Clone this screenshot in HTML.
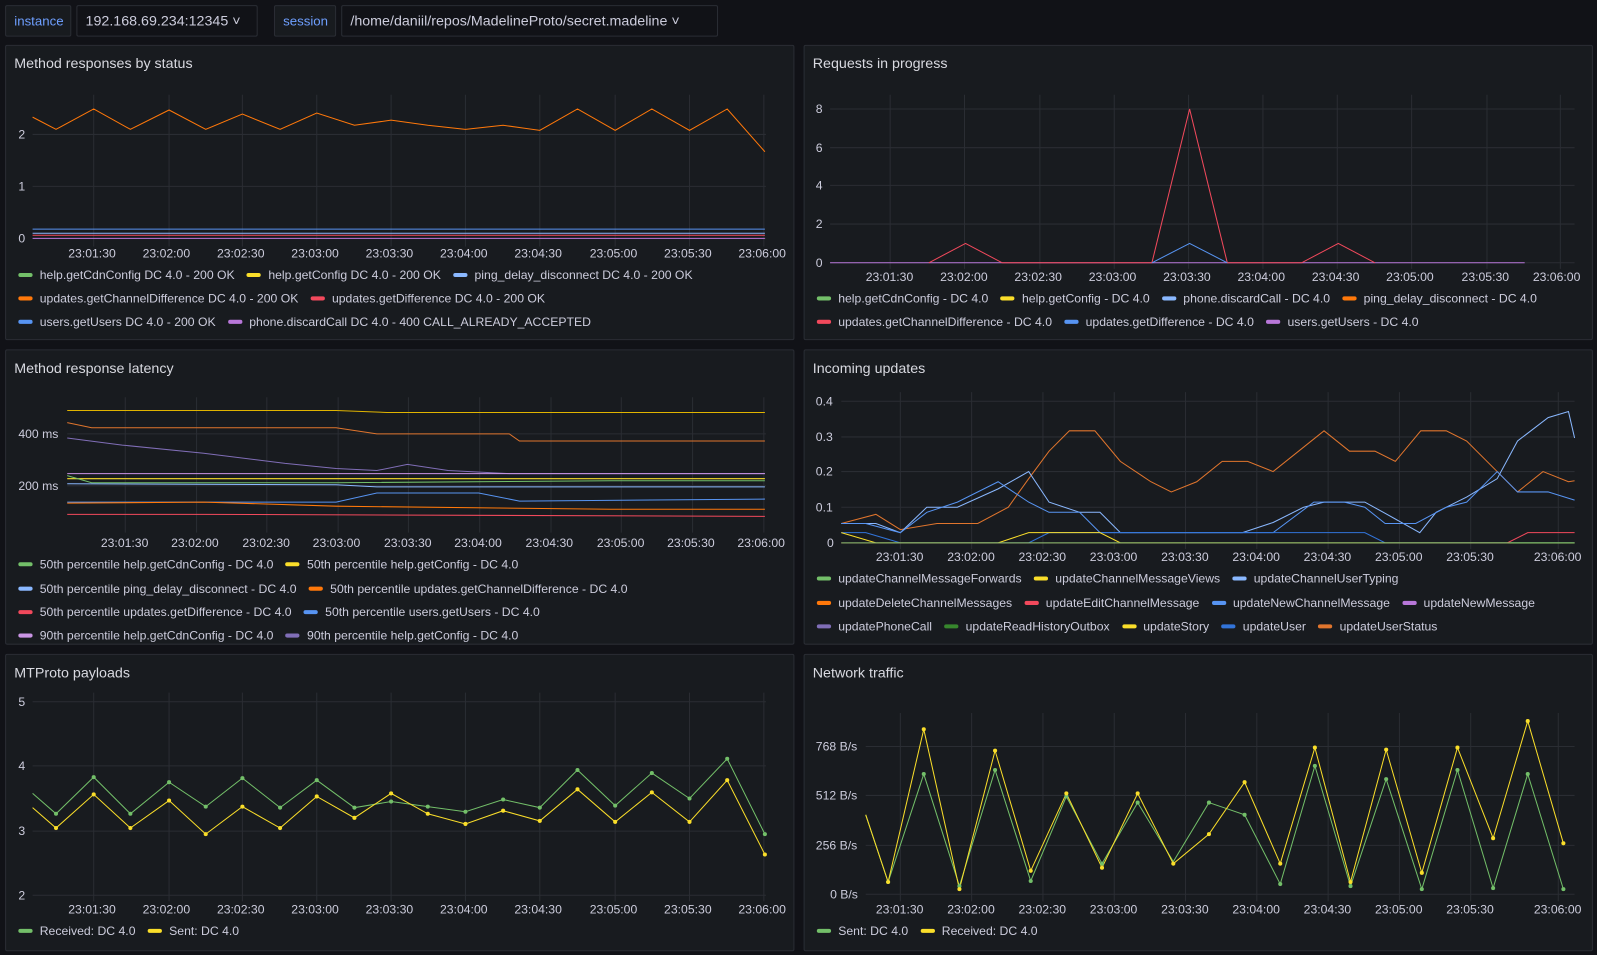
<!DOCTYPE html>
<html><head><meta charset="utf-8"><style>
body{margin:0;width:1597px;height:955px;background:#111217;font-family:"Liberation Sans",sans-serif;overflow:hidden;position:relative;color:#ccccdc}
#w{position:absolute;left:0;top:0;width:1568px;height:938px;transform:scale(1.01849);transform-origin:0 0}
.p{position:absolute;background:#181b1f;border:1px solid #2a2d34;border-radius:2px;box-sizing:border-box}
.t{position:absolute;left:8px;top:9px;font-size:14px;color:#d8d9e0}
.lg{position:absolute;font-size:12px;color:#ccccdc;white-space:nowrap}
.lg span{display:inline-block;width:14px;height:4px;border-radius:2px;margin:0 7px 2px 0;vertical-align:middle}
.lg b{font-weight:normal;margin-right:12px}
.box{position:absolute;top:5px;height:31px;border:1px solid #2a2d34;border-radius:2px;box-sizing:border-box;font-size:14px;line-height:29px;padding:0 8px}
svg{position:absolute;left:0;top:0}
svg text{font-family:"Liberation Sans",sans-serif;font-size:12px;fill:#ccccdc}
</style></head><body><div id="w">
<div class="box" style="left:5px;width:65px;background:#181b1f;color:#6e9fff;font-size:13px">instance</div>
<div class="box" style="left:75px;width:178px;background:#111217">192.168.69.234:12345 ˅</div>
<div class="box" style="left:269px;width:61px;background:#181b1f;color:#6e9fff;font-size:13px">session</div>
<div class="box" style="left:335px;width:370px;background:#111217">/home/daniil/repos/MadelineProto/secret.madeline ˅</div>

<div class="p" style="left:5px;top:44px;width:775px;height:290px"><div class="t">Method responses by status</div>
<div class="lg" style="left:12px;top:218px"><span style="background:#73bf69"></span><b>help.getCdnConfig DC 4.0 - 200 OK</b><span style="background:#fade2a"></span><b>help.getConfig DC 4.0 - 200 OK</b><span style="background:#8ab8ff"></span><b>ping_delay_disconnect DC 4.0 - 200 OK</b></div>
<div class="lg" style="left:12px;top:241px"><span style="background:#ff780a"></span><b>updates.getChannelDifference DC 4.0 - 200 OK</b><span style="background:#f2495c"></span><b>updates.getDifference DC 4.0 - 200 OK</b></div>
<div class="lg" style="left:12px;top:264px"><span style="background:#5794f2"></span><b>users.getUsers DC 4.0 - 200 OK</b><span style="background:#b877d9"></span><b>phone.discardCall DC 4.0 - 400 CALL_ALREADY_ACCEPTED</b></div></div>

<div class="p" style="left:789px;top:44px;width:775px;height:290px"><div class="t">Requests in progress</div>
<div class="lg" style="left:12px;top:241px"><span style="background:#73bf69"></span><b>help.getCdnConfig - DC 4.0</b><span style="background:#fade2a"></span><b>help.getConfig - DC 4.0</b><span style="background:#8ab8ff"></span><b>phone.discardCall - DC 4.0</b><span style="background:#ff780a"></span><b>ping_delay_disconnect - DC 4.0</b></div>
<div class="lg" style="left:12px;top:264px"><span style="background:#f2495c"></span><b>updates.getChannelDifference - DC 4.0</b><span style="background:#5794f2"></span><b>updates.getDifference - DC 4.0</b><span style="background:#b877d9"></span><b>users.getUsers - DC 4.0</b></div></div>

<div class="p" style="left:5px;top:343px;width:775px;height:290px;overflow:hidden"><div class="t">Method response latency</div>
<div class="lg" style="left:12px;top:203px"><span style="background:#73bf69"></span><b>50th percentile help.getCdnConfig - DC 4.0</b><span style="background:#fade2a"></span><b>50th percentile help.getConfig - DC 4.0</b></div>
<div class="lg" style="left:12px;top:227px"><span style="background:#8ab8ff"></span><b>50th percentile ping_delay_disconnect - DC 4.0</b><span style="background:#ff780a"></span><b>50th percentile updates.getChannelDifference - DC 4.0</b></div>
<div class="lg" style="left:12px;top:250px"><span style="background:#f2495c"></span><b>50th percentile updates.getDifference - DC 4.0</b><span style="background:#5794f2"></span><b>50th percentile users.getUsers - DC 4.0</b></div>
<div class="lg" style="left:12px;top:273px"><span style="background:#ca95e5"></span><b>90th percentile help.getCdnConfig - DC 4.0</b><span style="background:#806eb7"></span><b>90th percentile help.getConfig - DC 4.0</b></div></div>

<div class="p" style="left:789px;top:343px;width:775px;height:290px"><div class="t">Incoming updates</div>
<div class="lg" style="left:12px;top:217px"><span style="background:#73bf69"></span><b>updateChannelMessageForwards</b><span style="background:#fade2a"></span><b>updateChannelMessageViews</b><span style="background:#8ab8ff"></span><b>updateChannelUserTyping</b></div>
<div class="lg" style="left:12px;top:241px"><span style="background:#ff780a"></span><b>updateDeleteChannelMessages</b><span style="background:#f2495c"></span><b>updateEditChannelMessage</b><span style="background:#5794f2"></span><b>updateNewChannelMessage</b><span style="background:#b877d9"></span><b>updateNewMessage</b></div>
<div class="lg" style="left:12px;top:264px"><span style="background:#806eb7"></span><b>updatePhoneCall</b><span style="background:#37872d"></span><b>updateReadHistoryOutbox</b><span style="background:#fade2a"></span><b>updateStory</b><span style="background:#3274d9"></span><b>updateUser</b><span style="background:#e0752d"></span><b>updateUserStatus</b></div></div>

<div class="p" style="left:5px;top:642px;width:775px;height:292px"><div class="t">MTProto payloads</div>
<div class="lg" style="left:12px;top:264px"><span style="background:#73bf69"></span><b>Received: DC 4.0</b><span style="background:#fade2a"></span><b>Sent: DC 4.0</b></div></div>

<div class="p" style="left:789px;top:642px;width:775px;height:292px"><div class="t">Network traffic</div>
<div class="lg" style="left:12px;top:264px"><span style="background:#73bf69"></span><b>Sent: DC 4.0</b><span style="background:#fade2a"></span><b>Received: DC 4.0</b></div></div>

<svg width="1568" height="938" viewBox="0 0 1568 938">
<g stroke="#2a2d33" stroke-width="1">
<path d="M92 93V242M166 93V242M238 93V242M311 93V242M384 93V242M457 93V242M530 93V242M604 93V242M677 93V242M750 93V242M32 132H752M32 183H752M32 234H752"/>
<path d="M874 93V264M947 93V264M1021 93V264M1094 93V264M1167 93V264M1240 93V264M1313 93V264M1386 93V264M1460 93V264M1532 93V264M815 107H1546M815 145H1546M815 182H1546M815 220H1546M815 258H1546"/>
<path d="M123 390V523M193 390V523M262 390V523M332 390V523M401 390V523M471 390V523M541 390V523M610 390V523M680 390V523M750 390V523M66 426H752M66 477H752"/>
<path d="M884 385V539M954 385V539M1024 385V539M1094 385V539M1164 385V539M1234 385V539M1304 385V539M1374 385V539M1444 385V539M1530 385V539M826 394H1546M826 429H1546M826 463H1546M826 498H1546M826 533H1546"/>
<path d="M92 680V885M166 680V885M238 680V885M311 680V885M384 680V885M457 680V885M530 680V885M604 680V885M677 680V885M750 680V885M32 689H752M32 752H752M32 816H752M32 879H752"/>
<path d="M884 700V885M954 700V885M1024 700V885M1094 700V885M1164 700V885M1234 700V885M1304 700V885M1374 700V885M1444 700V885M1530 700V885M850 733H1546M850 781H1546M850 830H1546M850 878H1546"/>
</g>
<g>
<text x="18" y="136">2</text><text x="18" y="187">1</text><text x="18" y="238">0</text>
<text x="67" y="253">23:01:30</text><text x="140" y="253">23:02:00</text><text x="213" y="253">23:02:30</text><text x="286" y="253">23:03:00</text><text x="359" y="253">23:03:30</text><text x="432" y="253">23:04:00</text><text x="505" y="253">23:04:30</text><text x="579" y="253">23:05:00</text><text x="652" y="253">23:05:30</text><text x="725" y="253">23:06:00</text>
<text x="801" y="111">8</text><text x="801" y="149">6</text><text x="801" y="186">4</text><text x="801" y="224">2</text><text x="801" y="262">0</text>
<text x="850" y="276">23:01:30</text><text x="923" y="276">23:02:00</text><text x="996" y="276">23:02:30</text><text x="1069" y="276">23:03:00</text><text x="1142" y="276">23:03:30</text><text x="1215" y="276">23:04:00</text><text x="1288" y="276">23:04:30</text><text x="1361" y="276">23:05:00</text><text x="1435" y="276">23:05:30</text><text x="1505" y="276">23:06:00</text>
<text x="18" y="430">400 ms</text><text x="18" y="481">200 ms</text>
<text x="99" y="537">23:01:30</text><text x="168" y="537">23:02:00</text><text x="238" y="537">23:02:30</text><text x="307" y="537">23:03:00</text><text x="377" y="537">23:03:30</text><text x="446" y="537">23:04:00</text><text x="516" y="537">23:04:30</text><text x="586" y="537">23:05:00</text><text x="655" y="537">23:05:30</text><text x="724" y="537">23:06:00</text>
<text x="801" y="398">0.4</text><text x="801" y="433">0.3</text><text x="801" y="467">0.2</text><text x="801" y="502">0.1</text><text x="812" y="537">0</text>
<text x="860" y="551">23:01:30</text><text x="930" y="551">23:02:00</text><text x="1000" y="551">23:02:30</text><text x="1070" y="551">23:03:00</text><text x="1140" y="551">23:03:30</text><text x="1210" y="551">23:04:00</text><text x="1280" y="551">23:04:30</text><text x="1350" y="551">23:05:00</text><text x="1420" y="551">23:05:30</text><text x="1506" y="551">23:06:00</text>
<text x="18" y="693">5</text><text x="18" y="756">4</text><text x="18" y="820">3</text><text x="18" y="883">2</text>
<text x="67" y="897">23:01:30</text><text x="140" y="897">23:02:00</text><text x="213" y="897">23:02:30</text><text x="286" y="897">23:03:00</text><text x="359" y="897">23:03:30</text><text x="432" y="897">23:04:00</text><text x="505" y="897">23:04:30</text><text x="579" y="897">23:05:00</text><text x="652" y="897">23:05:30</text><text x="725" y="897">23:06:00</text>
<text x="801" y="737">768 B/s</text><text x="801" y="785">512 B/s</text><text x="801" y="834">256 B/s</text><text x="815" y="882">0 B/s</text>
<text x="860" y="897">23:01:30</text><text x="930" y="897">23:02:00</text><text x="1000" y="897">23:02:30</text><text x="1070" y="897">23:03:00</text><text x="1140" y="897">23:03:30</text><text x="1210" y="897">23:04:00</text><text x="1280" y="897">23:04:30</text><text x="1350" y="897">23:05:00</text><text x="1420" y="897">23:05:30</text><text x="1506" y="897">23:06:00</text>
</g>
<g fill="none" stroke-width="1">
<polyline stroke="#ff780a" points="32,115 55,127 92,107 128,127 166,108 202,127 238,112 275,127 311,111 348,123 384,118 420,123 457,127 494,123 530,128 567,107 604,128 640,107 677,128 714,107 751,149"/>
<path stroke="#5794f2" d="M32 225H751"/><path stroke="#8ab8ff" d="M32 229H751"/><path stroke="#b877d9" d="M32 234H751"/><path stroke="#f2495c" d="M32 231H751"/>
<path stroke="#b877d9" d="M815 258H1497"/>
<polyline stroke="#f2495c" points="912,258 948,239 984,258 1131,258 1168,107 1205,258 1278,258 1314,239 1350,258"/>
<polyline stroke="#5794f2" points="1131,258 1168,239 1205,258"/>
<polyline stroke="#e0b400" points="66,403 330,403 380,405 751,405"/>
<polyline stroke="#e0752d" points="66,415 90,420 330,420 370,426 500,426 510,433 751,433"/>
<polyline stroke="#806eb7" points="66,430 120,437 200,445 280,455 330,460 370,462 400,456 440,462 500,465 751,465"/>
<path stroke="#ca95e5" d="M66 465H751"/><path stroke="#fade2a" d="M66 470H751"/>
<polyline stroke="#73bf69" points="66,467 90,474 330,474 600,472 751,472"/>
<polyline stroke="#8ab8ff" points="66,475 330,476 370,478 751,478"/>
<polyline stroke="#5794f2" points="66,493 330,493 370,484 470,484 510,492 751,490"/>
<polyline stroke="#ff780a" points="66,494 200,493 330,497 600,500 751,500"/>
<polyline stroke="#f2495c" points="66,505 200,505 751,507"/>
<polyline stroke="#e0752d" points="826,514 860,505 884,520 920,514 960,514 990,498 1010,470 1030,443 1050,423 1075,423 1100,453 1130,473 1150,483 1175,473 1200,453 1225,453 1250,463 1275,443 1300,423 1325,443 1350,443 1370,453 1395,423 1420,423 1440,433 1470,463 1490,483 1515,463 1540,473 1546,472"/>
<polyline stroke="#8ab8ff" points="826,514 860,514 884,523 910,498 940,498 980,480 1010,463 1030,493 1060,503 1080,503 1100,523 1200,523 1220,523 1250,513 1280,498 1300,493 1340,493 1360,504 1394,523 1410,503 1440,488 1470,470 1490,433 1520,410 1540,404 1546,430"/>
<polyline stroke="#5794f2" points="826,514 850,514 884,523 910,503 940,493 980,473 1010,493 1030,503 1060,503 1080,523 1250,523 1290,493 1320,493 1340,498 1360,514 1390,514 1420,498 1440,493 1470,463 1490,483 1520,483 1546,491"/>
<polyline stroke="#3274d9" points="826,523 850,523 884,533 1010,533 1030,523 1060,523 1280,523 1300,523 1340,523 1360,533 1546,533"/>
<polyline stroke="#fade2a" points="826,523 860,533 940,533 980,533 1010,523 1080,523 1100,533 1546,533"/>
<polyline stroke="#f2495c" points="826,533 1480,533 1500,523 1546,523"/>
<polyline stroke="#73bf69" points="826,533 1546,533"/>
</g>
<g fill="none" stroke-width="1">
<polyline stroke="#73bf69" points="32,779 55,799 92,763 128,799 166,768 202,792 238,764 275,793 311,766 348,793 384,787 420,792 457,797 494,785 530,793 567,756 604,791 640,759 677,784 714,745 751,819"/>
<polyline stroke="#fade2a" points="32,793 55,813 92,780 128,813 166,786 202,819 238,792 275,813 311,782 348,803 384,779 420,799 457,809 494,796 530,806 567,775 604,807 640,778 677,807 714,766 751,839"/>
<polyline stroke="#73bf69" points="850,800 872,866 907,760 942,870 977,756 1012,865 1047,782 1082,848 1117,788 1152,846 1187,788 1222,800 1257,868 1291,752 1326,870 1361,765 1396,873 1431,756 1466,872 1500,760 1535,873"/>
<polyline stroke="#fade2a" points="850,800 872,866 907,716 942,873 977,737 1012,855 1047,779 1082,852 1117,779 1152,848 1187,819 1222,768 1257,848 1291,734 1326,866 1361,736 1396,857 1431,734 1466,823 1500,708 1535,828"/>
</g>
<g fill="#73bf69">
<circle cx="55" cy="799" r="2"/><circle cx="92" cy="763" r="2"/><circle cx="128" cy="799" r="2"/><circle cx="166" cy="768" r="2"/><circle cx="202" cy="792" r="2"/><circle cx="238" cy="764" r="2"/><circle cx="275" cy="793" r="2"/><circle cx="311" cy="766" r="2"/><circle cx="348" cy="793" r="2"/><circle cx="384" cy="787" r="2"/><circle cx="420" cy="792" r="2"/><circle cx="457" cy="797" r="2"/><circle cx="494" cy="785" r="2"/><circle cx="530" cy="793" r="2"/><circle cx="567" cy="756" r="2"/><circle cx="604" cy="791" r="2"/><circle cx="640" cy="759" r="2"/><circle cx="677" cy="784" r="2"/><circle cx="714" cy="745" r="2"/><circle cx="751" cy="819" r="2"/>
<circle cx="872" cy="866" r="2"/><circle cx="907" cy="760" r="2"/><circle cx="942" cy="870" r="2"/><circle cx="977" cy="756" r="2"/><circle cx="1012" cy="865" r="2"/><circle cx="1047" cy="782" r="2"/><circle cx="1082" cy="848" r="2"/><circle cx="1117" cy="788" r="2"/><circle cx="1187" cy="788" r="2"/><circle cx="1222" cy="800" r="2"/><circle cx="1257" cy="868" r="2"/><circle cx="1291" cy="752" r="2"/><circle cx="1326" cy="870" r="2"/><circle cx="1361" cy="765" r="2"/><circle cx="1396" cy="873" r="2"/><circle cx="1431" cy="756" r="2"/><circle cx="1466" cy="872" r="2"/><circle cx="1500" cy="760" r="2"/><circle cx="1535" cy="873" r="2"/>
</g>
<g fill="#fade2a">
<circle cx="55" cy="813" r="2"/><circle cx="92" cy="780" r="2"/><circle cx="128" cy="813" r="2"/><circle cx="166" cy="786" r="2"/><circle cx="202" cy="819" r="2"/><circle cx="238" cy="792" r="2"/><circle cx="275" cy="813" r="2"/><circle cx="311" cy="782" r="2"/><circle cx="348" cy="803" r="2"/><circle cx="384" cy="779" r="2"/><circle cx="420" cy="799" r="2"/><circle cx="457" cy="809" r="2"/><circle cx="494" cy="796" r="2"/><circle cx="530" cy="806" r="2"/><circle cx="567" cy="775" r="2"/><circle cx="604" cy="807" r="2"/><circle cx="640" cy="778" r="2"/><circle cx="677" cy="807" r="2"/><circle cx="714" cy="766" r="2"/><circle cx="751" cy="839" r="2"/>
<circle cx="872" cy="866" r="2"/><circle cx="907" cy="716" r="2"/><circle cx="942" cy="873" r="2"/><circle cx="977" cy="737" r="2"/><circle cx="1012" cy="855" r="2"/><circle cx="1047" cy="779" r="2"/><circle cx="1082" cy="852" r="2"/><circle cx="1117" cy="779" r="2"/><circle cx="1152" cy="848" r="2"/><circle cx="1187" cy="819" r="2"/><circle cx="1222" cy="768" r="2"/><circle cx="1257" cy="848" r="2"/><circle cx="1291" cy="734" r="2"/><circle cx="1326" cy="866" r="2"/><circle cx="1361" cy="736" r="2"/><circle cx="1396" cy="857" r="2"/><circle cx="1431" cy="734" r="2"/><circle cx="1466" cy="823" r="2"/><circle cx="1500" cy="708" r="2"/><circle cx="1535" cy="828" r="2"/>
</g>
</svg>
</div></body></html>
